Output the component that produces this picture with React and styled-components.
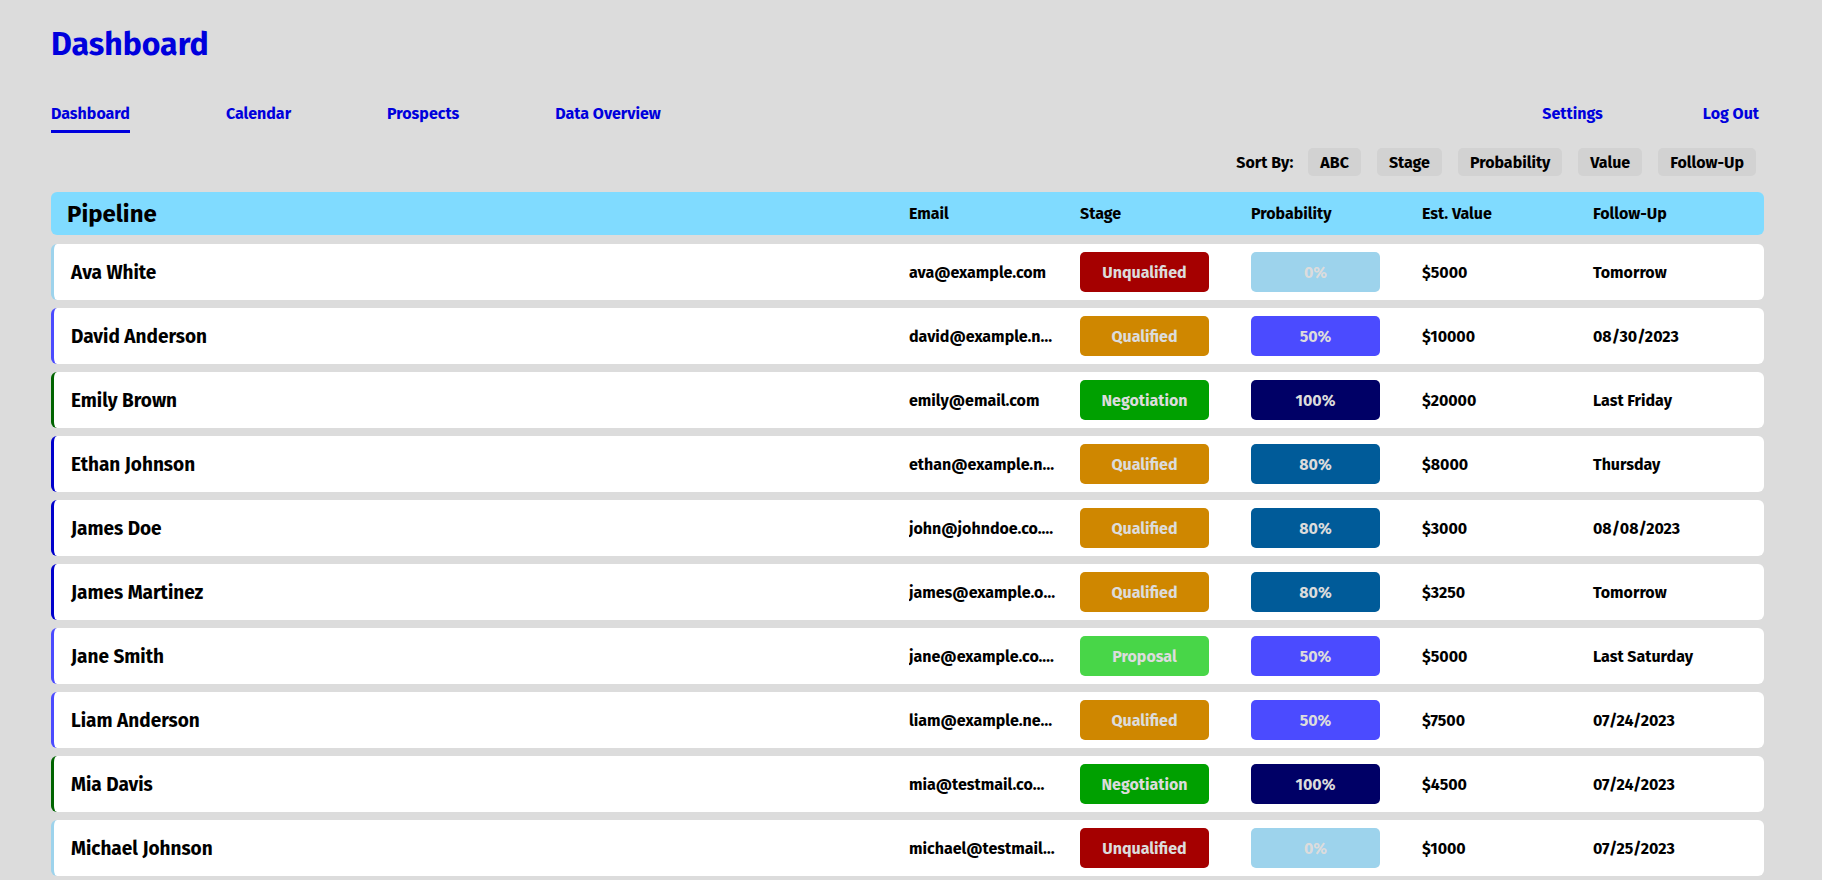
import React from 'react';
import styled, { createGlobalStyle } from 'styled-components';

const GlobalStyle = createGlobalStyle`
  html, body {
    margin: 0;
    padding: 0;
    background: #dcdcdc;
    font-family: "Fira Sans", Lato, "Noto Sans", sans-serif;
  }
`;

const Page = styled.div`
  padding: 24px 58px 40px 51px;
  min-height: 100vh;
  box-sizing: border-box;
`;

const Title = styled.h1`
  margin: 0;
  font-size: 32px;
  line-height: 40px;
  font-weight: 700;
  color: #0000dd;
`;

const Nav = styled.nav`
  display: flex;
  justify-content: space-between;
  align-items: flex-start;
  margin-top: 40px;
  padding-right: 5px;
`;

const NavGroup = styled.div`
  display: flex;
  gap: ${props => props.gap}px;
`;

const NavLink = styled.a`
  font-size: 16px;
  line-height: 20px;
  font-weight: 700;
  color: #0000dd;
  text-decoration: none;
  padding-bottom: 6px;
  border-bottom: 3px solid ${props => props.active ? '#0000dd' : 'transparent'};
  cursor: pointer;
`;

const SortRow = styled.div`
  display: flex;
  justify-content: flex-end;
  align-items: center;
  gap: 16px;
  margin-top: 15px;
  padding-right: 8px;
`;

const SortLabel = styled.span`
  margin-right: -1px;
  font-size: 16px;
  font-weight: 700;
  color: #000;
`;

const SortButton = styled.button`
  height: 28px;
  padding: 0 12px;
  border: none;
  border-radius: 5px;
  background: #d2d2d2;
  font-family: inherit;
  font-size: 16px;
  font-weight: 700;
  color: #000;
  cursor: pointer;
`;

const Grid = styled.div`
  display: grid;
  grid-template-columns: 1fr repeat(5, 171px);
  align-items: center;
`;

const HeaderBar = styled(Grid)`
  margin-top: 16px;
  height: 43px;
  background: #80dbff;
  border-radius: 6px;
`;

const PipelineTitle = styled.h2`
  margin: 0;
  padding-left: 16px;
  font-size: 24px;
  font-weight: 700;
  color: #000;
`;

const HeaderCell = styled.span`
  font-size: 16px;
  font-weight: 700;
  color: #000;
`;

const List = styled.div`
  display: flex;
  flex-direction: column;
  gap: 8px;
  margin-top: 9px;
`;

const Row = styled(Grid)`
  height: 56px;
  background: #fff;
  border-radius: 6px;
  border-left: 3px solid ${props => props.accent};
  box-sizing: border-box;
`;

const Name = styled.span`
  padding-left: 17px;
  font-size: 19px;
  font-weight: 700;
  color: #000;
`;

const Email = styled.span`
  max-width: 147px;
  font-size: 16px;
  font-weight: 700;
  color: #000;
  white-space: nowrap;
  overflow: hidden;
  text-overflow: ellipsis;
`;

const Badge = styled.span`
  display: flex;
  align-items: center;
  justify-content: center;
  width: 129px;
  height: 40px;
  border-radius: 5px;
  background: ${props => props.bg};
  color: #dcdcdc;
  font-size: 16px;
  font-weight: 700;
`;

const Cell = styled.span`
  font-size: 16px;
  font-weight: 700;
  color: #000;
`;

const stageColors = {
  Unqualified: '#a50000',
  Qualified: '#cf8700',
  Negotiation: '#00a000',
  Proposal: '#48d648',
};

const probColors = {
  0: '#9dd3ec',
  50: '#4b4bff',
  80: '#005b99',
  100: '#000066',
};

const accentColors = {
  0: '#9dd3ec',
  50: '#4b4bff',
  80: '#0000cc',
  100: '#006400',
};

const prospects = [
  { name: 'Ava White', email: 'ava@example.com', stage: 'Unqualified', prob: 0, value: 5000, follow: 'Tomorrow' },
  { name: 'David Anderson', email: 'david@example.net.au', stage: 'Qualified', prob: 50, value: 10000, follow: '08/30/2023' },
  { name: 'Emily Brown', email: 'emily@email.com', stage: 'Negotiation', prob: 100, value: 20000, follow: 'Last Friday' },
  { name: 'Ethan Johnson', email: 'ethan@example.net', stage: 'Qualified', prob: 80, value: 8000, follow: 'Thursday' },
  { name: 'James Doe', email: 'john@johndoe.co.uk', stage: 'Qualified', prob: 80, value: 3000, follow: '08/08/2023' },
  { name: 'James Martinez', email: 'james@example.org', stage: 'Qualified', prob: 80, value: 3250, follow: 'Tomorrow' },
  { name: 'Jane Smith', email: 'jane@example.co.uk', stage: 'Proposal', prob: 50, value: 5000, follow: 'Last Saturday' },
  { name: 'Liam Anderson', email: 'liam@example.network', stage: 'Qualified', prob: 50, value: 7500, follow: '07/24/2023' },
  { name: 'Mia Davis', email: 'mia@testmail.com.au', stage: 'Negotiation', prob: 100, value: 4500, follow: '07/24/2023' },
  { name: 'Michael Johnson', email: 'michael@testmail.com', stage: 'Unqualified', prob: 0, value: 1000, follow: '07/25/2023' },
];

const App = () => {
  return (
    <>
      <GlobalStyle />
      <Page>
        <Title>Dashboard</Title>
        <Nav>
          <NavGroup gap={96}>
            <NavLink active>Dashboard</NavLink>
            <NavLink>Calendar</NavLink>
            <NavLink>Prospects</NavLink>
            <NavLink>Data Overview</NavLink>
          </NavGroup>
          <NavGroup gap={100}>
            <NavLink>Settings</NavLink>
            <NavLink>Log Out</NavLink>
          </NavGroup>
        </Nav>
        <SortRow>
          <SortLabel>Sort By:</SortLabel>
          <SortButton>ABC</SortButton>
          <SortButton>Stage</SortButton>
          <SortButton>Probability</SortButton>
          <SortButton>Value</SortButton>
          <SortButton>Follow-Up</SortButton>
        </SortRow>
        <HeaderBar>
          <PipelineTitle>Pipeline</PipelineTitle>
          <HeaderCell>Email</HeaderCell>
          <HeaderCell>Stage</HeaderCell>
          <HeaderCell>Probability</HeaderCell>
          <HeaderCell>Est. Value</HeaderCell>
          <HeaderCell>Follow-Up</HeaderCell>
        </HeaderBar>
        <List>
          {prospects.map((p) => (
            <Row key={p.name} accent={accentColors[p.prob]}>
              <Name>{p.name}</Name>
              <Email>{p.email}</Email>
              <Badge bg={stageColors[p.stage]}>{p.stage}</Badge>
              <Badge bg={probColors[p.prob]}>{p.prob}%</Badge>
              <Cell>${p.value}</Cell>
              <Cell>{p.follow}</Cell>
            </Row>
          ))}
        </List>
      </Page>
    </>
  );
};

export default App;
